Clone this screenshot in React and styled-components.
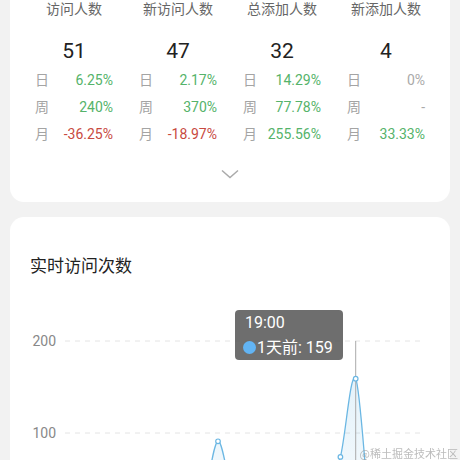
import React from "react";
import styled, { createGlobalStyle } from "styled-components";

const Global = createGlobalStyle`
  html, body { margin: 0; padding: 0; background: #f2f2f2; overflow: hidden; }
  body { font-family: Roboto, "Noto Sans CJK SC", sans-serif; }
`;

const Page = styled.div`
  width: 460px;
  height: 460px;
  padding: 0 10px;
  box-sizing: border-box;
  overflow: hidden;
`;

const Card = styled.div`
  background: #fff;
  border-radius: 14px;
`;

const StatsCard = styled(Card)`
  margin-top: -20px;
  padding: 20px 12px 23px;
`;

const Columns = styled.div`
  display: grid;
  grid-template-columns: repeat(4, 1fr);
`;

const Column = styled.div`
  display: flex;
  flex-direction: column;
  padding: 0 13px;
`;

const Head = styled.div`
  font-size: 14px;
  line-height: 18px;
  color: #666;
  text-align: center;
  white-space: nowrap;
  margin: 0 -13px;
`;

const Big = styled.div`
  font-size: 21px;
  line-height: 28px;
  color: #222;
  text-align: center;
  margin: 19px 0 2px;
`;

const Row = styled.div`
  display: flex;
  justify-content: space-between;
  font-size: 14px;
  line-height: 27px;
`;

const RowLabel = styled.span`
  color: #a4a4a4;
`;

const RowValue = styled.span`
  color: ${(p) => (p.$tone === "up" ? "#55b36a" : p.$tone === "down" ? "#c84a3f" : "#aaa")};
`;

const More = styled.div`
  display: flex;
  justify-content: center;
  margin-top: 21px;
`;

const ChartCard = styled(Card)`
  margin-top: 15px;
  padding-top: 37px;
  height: 400px;
`;

const Title = styled.div`
  font-size: 17px;
  line-height: 24px;
  color: #222;
  padding-left: 20px;
`;

const ChartBox = styled.div`
  position: relative;
  width: 440px;
  height: 250px;
`;

const Tip = styled.div`
  position: absolute;
  left: 225px;
  top: 32px;
  width: 108px;
  height: 50px;
  box-sizing: border-box;
  padding: 0 6px 0 8px;
  border-radius: 4px;
  background: rgba(85, 85, 85, 0.85);
  color: #fff;
  font-size: 16px;
  line-height: 25px;
  white-space: nowrap;
`;

const TipTime = styled.div`
  padding-left: 2px;
`;

const TipRow = styled.div`
  display: flex;
  align-items: center;
`;

const Dot = styled.span`
  width: 13px;
  height: 13px;
  border-radius: 50%;
  background: #62b4f4;
  margin-right: 1px;
`;

const Mark = styled.div`
  position: fixed;
  right: 2px;
  bottom: 0;
  font-size: 11px;
  line-height: 14px;
  color: rgba(160, 160, 160, 0.7);
  font-family: "Noto Sans CJK SC", sans-serif;
`;

const stats = [
  { title: "访问人数", total: 51, rows: [["6.25%", "up"], ["240%", "up"], ["-36.25%", "down"]] },
  { title: "新访问人数", total: 47, rows: [["2.17%", "up"], ["370%", "up"], ["-18.97%", "down"]] },
  { title: "总添加人数", total: 32, rows: [["14.29%", "up"], ["77.78%", "up"], ["255.56%", "up"]] },
  { title: "新添加人数", total: 4, rows: [["0%", "flat"], ["-", "flat"], ["33.33%", "up"]] },
];
const rowNames = ["日", "周", "月"];

const values = [5, 3, 2, 1, 1, 2, 8, 20, 30, 25, 91, 30, 20, 25, 28, 22, 20, 30, 74, 159, 10, 20, 10, 5];
const px = (h) => 55 + h * 15.3;
const py = (v) => 247 - v * 0.92;

function linePath(pts) {
  let d = `M${pts[0][0]},${pts[0][1]}`;
  for (let i = 0; i < pts.length - 1; i++) {
    const p0 = pts[i - 1] || pts[i];
    const p1 = pts[i];
    const p2 = pts[i + 1];
    const p3 = pts[i + 2] || p2;
    const c1 = [p1[0] + (p2[0] - p0[0]) / 6, p1[1] + (p2[1] - p0[1]) / 6];
    const c2 = [p2[0] - (p3[0] - p1[0]) / 6, p2[1] - (p3[1] - p1[1]) / 6];
    d += ` C${c1[0]},${c1[1]} ${c2[0]},${c2[1]} ${p2[0]},${p2[1]}`;
  }
  return d;
}

function Chart() {
  const pts = values.map((v, h) => [px(h), py(v)]);
  const line = linePath(pts);
  const area = `${line} L${px(23)},247 L${px(0)},247 Z`;
  return (
    <svg width="440" height="250">
      <defs>
        <linearGradient id="fill" x1="0" y1="0" x2="0" y2="1">
          <stop offset="0" stopColor="#6bb7e3" stopOpacity="0.18" />
          <stop offset="1" stopColor="#6bb7e3" stopOpacity="0.05" />
        </linearGradient>
      </defs>
      {[63, 155].map((y, i) => (
        <g key={y}>
          <line x1="55" x2="410" y1={y} y2={y} stroke="#e4e4e4" strokeDasharray="5 5" />
          <text x="46" y={y + 5} textAnchor="end" fontSize="14" fill="#888" fontFamily="Roboto, sans-serif">
            {i === 0 ? "200" : "100"}
          </text>
        </g>
      ))}
      <path d={area} fill="url(#fill)" />
      <path d={line} fill="none" stroke="#6bb7e3" strokeWidth="1.3" />
      <line x1={px(19)} x2={px(19)} y1="63" y2="250" stroke="#aaa" strokeWidth="1" />
      {pts.map(([x, y], i) => (
        <circle key={i} cx={x} cy={y} r="2.3" fill="#fff" stroke="#6bb7e3" strokeWidth="1.2" />
      ))}
    </svg>
  );
}

export default function App() {
  return (
    <Page>
      <Global />
      <StatsCard>
        <Columns>
          {stats.map((s) => (
            <Column key={s.title}>
              <Head>{s.title}</Head>
              <Big>{s.total}</Big>
              {s.rows.map(([val, tone], i) => (
                <Row key={i}>
                  <RowLabel>{rowNames[i]}</RowLabel>
                  <RowValue $tone={tone}>{val}</RowValue>
                </Row>
              ))}
            </Column>
          ))}
        </Columns>
        <More>
          <svg width="18" height="10" viewBox="0 0 18 10">
            <path d="M1 1.5 L9 8.5 L17 1.5" fill="none" stroke="#aaa" strokeWidth="1.5" />
          </svg>
        </More>
      </StatsCard>
      <ChartCard>
        <Title>实时访问次数</Title>
        <ChartBox>
          <Chart />
          <Tip>
            <TipTime>19:00</TipTime>
            <TipRow>
              <Dot />
              <span>1天前: 159</span>
            </TipRow>
          </Tip>
        </ChartBox>
      </ChartCard>
      <Mark>@稀土掘金技术社区</Mark>
    </Page>
  );
}
